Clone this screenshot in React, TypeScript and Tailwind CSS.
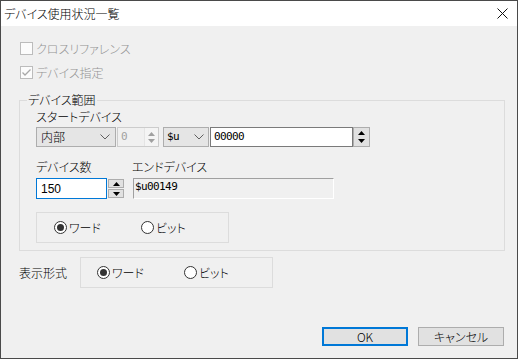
import React from "react";

const JP = "font-['Noto_Sans_CJK_JP','Noto_Sans',sans-serif] font-light [font-feature-settings:'palt']";
const MONO = "font-['DejaVu_Sans_Mono',monospace] text-[11px] tracking-[-0.6px]";

function Chevron({ color = "#606060" }: { color?: string }) {
  return (
    <svg width="10" height="6" viewBox="0 0 10 6">
      <polyline points="0.5,0.5 5,5 9.5,0.5" fill="none" stroke={color} strokeWidth="1" />
    </svg>
  );
}

function Tri({ up, color = "#000" }: { up: boolean; color?: string }) {
  return (
    <svg width="7" height="4" viewBox="0 0 7 4">
      {up ? <polygon points="0,4 7,4 3.5,0" fill={color} /> : <polygon points="0,0 7,0 3.5,4" fill={color} />}
    </svg>
  );
}

function Check({ checked, label }: { checked: boolean; label: string }) {
  return (
    <div className="flex items-center h-[13px] ml-[1px]">
      <div className="w-[13px] h-[13px] border border-[#bcbcbc] bg-[#fcfcfc] flex items-center justify-center">
        {checked && (
          <svg width="11" height="11" viewBox="0 0 11 11">
            <polyline points="1.5,5.5 4,8 9.5,2.5" fill="none" stroke="#a8a8a8" strokeWidth="1.3" />
          </svg>
        )}
      </div>
      <span className={`ml-[3px] text-[12px] leading-[14px] text-[#939393] ${JP}`}>{label}</span>
    </div>
  );
}

function Radio({ checked, label }: { checked: boolean; label: string }) {
  return (
    <div className="flex items-center w-[87px]">
      <div className="w-[13px] h-[13px] rounded-full border border-[#333] bg-white flex items-center justify-center">
        {checked && <div className="w-[7px] h-[7px] rounded-full bg-[#333]" />}
      </div>
      <span className={`ml-[2px] text-[12px] leading-[14px] text-black ${JP}`}>{label}</span>
    </div>
  );
}

export default function App() {
  return (
    <div className="w-[518px] h-[359px] border border-[#4a4a4a] bg-[#f0f0f0] flex flex-col overflow-hidden">
      {/* title bar */}
      <div className="h-[25px] bg-white flex items-center justify-between pl-[3px] pr-[9px] shrink-0">
        <span className={`text-[12px] leading-[14px] text-black ${JP}`}>デバイス使用状況一覧</span>
        <svg width="11" height="11" viewBox="0 0 11 11">
          <path d="M0.5,0.5 L10.5,10.5 M10.5,0.5 L0.5,10.5" stroke="#111" strokeWidth="1" />
        </svg>
      </div>

      {/* body */}
      <div className="flex-1 flex flex-col pl-[18px] pt-[16px]">
        <Check checked={false} label="クロスリファレンス" />
        <div className="mt-[11px]">
          <Check checked={true} label="デバイス指定" />
        </div>

        {/* group box */}
        <div className="relative mt-[21px] w-[486px] h-[151px] border border-[#dcdcdc] pl-[16px] pt-[9px] flex flex-col shrink-0">
          <span className={`absolute left-[7px] top-[-8px] px-[1px] bg-[#f0f0f0] text-[12px] leading-[14px] text-black ${JP}`}>
            デバイス範囲
          </span>
          <div className={`text-[12px] leading-[14px] text-black ${JP}`}>スタートデバイス</div>

          <div className="mt-[3px] flex items-center h-[20px]">
            {/* combo 内部 */}
            <div className="w-[80px] h-[20px] border border-[#adadad] bg-[#e5e5e5] flex items-center justify-between pl-[4px] pr-[5px]">
              <span className={`text-[12px] leading-[14px] text-black ${JP}`}>内部</span>
              <Chevron />
            </div>
            {/* disabled spin */}
            <div className="ml-[1px] w-[42px] h-[20px] border border-[#cccccc] bg-[#f0f0f0] flex items-stretch">
              <span className={`flex-1 pl-[3px] leading-[18px] text-[#a0a0a0] ${MONO}`}>0</span>
              <div className="w-[14px] flex flex-col items-center justify-center gap-[3px] bg-[#f4f4f4] border-l border-[#e4e4e4]">
                <Tri up={true} color="#a0a0a0" />
                <Tri up={false} color="#a0a0a0" />
              </div>
            </div>
            {/* combo $u */}
            <div className="ml-[4px] w-[46px] h-[20px] border border-[#adadad] bg-[#e5e5e5] flex items-center justify-between pl-[3px] pr-[4px]">
              <span className={`leading-[14px] text-black ${MONO}`}>$u</span>
              <Chevron />
            </div>
            {/* text 00000 */}
            <div className="ml-[1px] w-[143px] h-[20px] border border-[#7a7a7a] bg-white flex items-center pl-[3px]">
              <span className={`leading-[14px] text-black ${MONO}`}>00000</span>
            </div>
            <div className="w-[17px] h-[20px] border border-[#adadad] bg-[#e1e1e1] flex flex-col items-center justify-center gap-[4px]">
              <Tri up={true} />
              <Tri up={false} />
            </div>
          </div>

          <div className={`mt-[13px] flex text-[12px] leading-[14px] text-black ${JP}`}>
            <span className="w-[96px]">デバイス数</span>
            <span>エンドデバイス</span>
          </div>

          <div className="mt-[4px] flex items-center h-[21px]">
            <div className="w-[71px] h-[21px] border border-[#0078d7] bg-white flex items-center pl-[4px]">
              <span className="font-['Liberation_Sans',sans-serif] text-[12px] leading-[14px] text-black">150</span>
            </div>
            <div className="ml-[1px] w-[16px] h-[21px] flex flex-col justify-between py-[1px]">
              <div className="h-[9px] border border-[#adadad] bg-[#e1e1e1] flex items-center justify-center">
                <Tri up={true} />
              </div>
              <div className="h-[9px] border border-[#adadad] bg-[#e1e1e1] flex items-center justify-center">
                <Tri up={false} />
              </div>
            </div>
            <div className="ml-[9px] w-[201px] h-[21px] border border-t-[#a0a0a0] border-l-[#a0a0a0] border-b-white border-r-white bg-[#f0f0f0] pl-[1px] pt-[1px]">
              <span className={`block leading-[14px] text-black ${MONO}`}>$u00149</span>
            </div>
          </div>

          <div className="mt-[13px] w-[193px] h-[31px] border border-[#dcdcdc] flex items-center pl-[17px]">
            <Radio checked={true} label="ワード" />
            <Radio checked={false} label="ビット" />
          </div>
        </div>

        {/* 表示形式 */}
        <div className="mt-[6px] flex items-center">
          <span className={`w-[61px] text-[12px] leading-[14px] text-black ${JP}`}>表示形式</span>
          <div className="w-[193px] h-[31px] border border-[#dcdcdc] flex items-center pl-[16px]">
            <Radio checked={true} label="ワード" />
            <Radio checked={false} label="ビット" />
          </div>
        </div>

        <div className="flex-1" />

        <div className="flex justify-end gap-[10px] pr-[13px] pb-[12px]">
          <div className={`w-[86px] h-[19px] border-2 border-[#0078d7] bg-[#e1e1e1] flex items-center justify-center text-[12px] leading-[14px] text-black ${JP}`}>
            OK
          </div>
          <div className={`w-[86px] h-[19px] border border-[#adadad] bg-[#e1e1e1] flex items-center justify-center text-[12px] leading-[14px] text-black ${JP}`}>
            キャンセル
          </div>
        </div>
      </div>
    </div>
  );
}
